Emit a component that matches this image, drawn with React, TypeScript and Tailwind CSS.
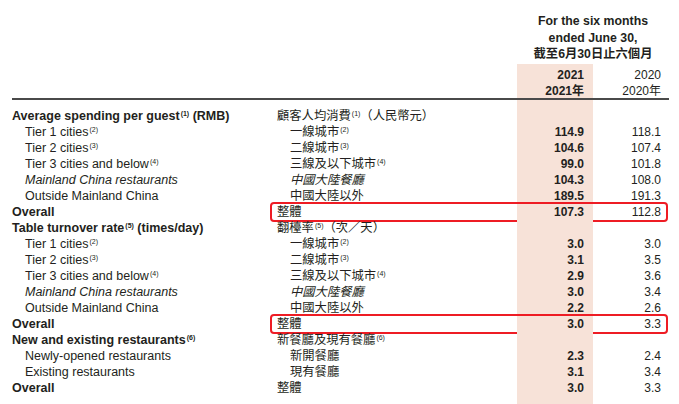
import React from "react";

type Row = {
  en: string;
  enSup?: string;
  enSuffix?: string;
  zh: string;
  zhSup?: string;
  zhSuffix?: string;
  kind: "head" | "sub" | "italic" | "total";
  a?: string;
  b?: string;
  hl?: boolean;
};

const rows: Row[] = [
  { en: "Average spending per guest", enSup: "(1)", enSuffix: " (RMB)", zh: "顧客人均消費", zhSup: "(1)", zhSuffix: "（人民幣元）", kind: "head" },
  { en: "Tier 1 cities", enSup: "(2)", zh: "一線城市", zhSup: "(2)", kind: "sub", a: "114.9", b: "118.1" },
  { en: "Tier 2 cities", enSup: "(3)", zh: "二線城市", zhSup: "(3)", kind: "sub", a: "104.6", b: "107.4" },
  { en: "Tier 3 cities and below", enSup: "(4)", zh: "三線及以下城市", zhSup: "(4)", kind: "sub", a: "99.0", b: "101.8" },
  { en: "Mainland China restaurants", zh: "中國大陸餐廳", kind: "italic", a: "104.3", b: "108.0" },
  { en: "Outside Mainland China", zh: "中國大陸以外", kind: "sub", a: "189.5", b: "191.3" },
  { en: "Overall", zh: "整體", kind: "total", a: "107.3", b: "112.8", hl: true },
  { en: "Table turnover rate", enSup: "(5)", enSuffix: " (times/day)", zh: "翻檯率", zhSup: "(5)", zhSuffix: "（次／天）", kind: "head" },
  { en: "Tier 1 cities", enSup: "(2)", zh: "一線城市", zhSup: "(2)", kind: "sub", a: "3.0", b: "3.0" },
  { en: "Tier 2 cities", enSup: "(3)", zh: "二線城市", zhSup: "(3)", kind: "sub", a: "3.1", b: "3.5" },
  { en: "Tier 3 cities and below", enSup: "(4)", zh: "三線及以下城市", zhSup: "(4)", kind: "sub", a: "2.9", b: "3.6" },
  { en: "Mainland China restaurants", zh: "中國大陸餐廳", kind: "italic", a: "3.0", b: "3.4" },
  { en: "Outside Mainland China", zh: "中國大陸以外", kind: "sub", a: "2.2", b: "2.6" },
  { en: "Overall", zh: "整體", kind: "total", a: "3.0", b: "3.3", hl: true },
  { en: "New and existing restaurants", enSup: "(6)", zh: "新餐廳及現有餐廳", zhSup: "(6)", kind: "head" },
  { en: "Newly-opened restaurants", zh: "新開餐廳", kind: "sub", a: "2.3", b: "2.4" },
  { en: "Existing restaurants", zh: "現有餐廳", kind: "sub", a: "3.1", b: "3.4" },
  { en: "Overall", zh: "整體", kind: "total", a: "3.0", b: "3.3" },
];

function Sup({ c }: { c: string }) {
  return <span className="relative -top-[4px] ml-[1px] text-[7px] leading-none">{c}</span>;
}

const SHADE = "bg-[#f7e2d8]";

function DataRow({ r }: { r: Row }) {
  const bold = r.kind === "head" || r.kind === "total";
  const indent = r.kind === "sub" || r.kind === "italic";
  const italic = r.kind === "italic";
  return (
    <div className="flex h-4 leading-4">
      <div
        className={`w-[272px] shrink-0 whitespace-nowrap text-[12.5px] ${indent ? "pl-[25px]" : "pl-3"} ${bold ? "font-bold" : ""} ${italic ? "italic" : ""}`}
      >
        {r.en}
        {r.enSup && <Sup c={r.enSup} />}
        {r.enSuffix}
      </div>
      <div
        className={`flex w-[394px] shrink-0 ${r.hl ? "rounded-[2px] outline-[length:2.5px] outline-offset-0 outline-[#ee1c24]" : ""}`}
      >
        <div className={`w-[245px] shrink-0 whitespace-nowrap text-[12.3px] ${indent ? "pl-[18px]" : "pl-[5px]"} ${italic ? "italic" : ""}`}>
          {r.zh}
          {r.zhSup && <Sup c={r.zhSup} />}
          {r.zhSuffix}
        </div>
        <div className={`w-[76px] shrink-0 pr-[9px] text-right font-bold ${SHADE}`}>{r.a}</div>
        <div className="w-[73px] shrink-0 pr-[5px] text-right">{r.b}</div>
      </div>
    </div>
  );
}

function ShadeRow({ h }: { h: string }) {
  return (
    <div className={`flex ${h}`}>
      <div className="w-[517px] shrink-0" />
      <div className={`w-[76px] shrink-0 ${SHADE}`} />
    </div>
  );
}

export default function App() {
  return (
    <div
      className="flex h-[404px] w-[679px] flex-col overflow-hidden bg-white text-[12px] text-[#231f20]"
      style={{ fontFamily: '"Liberation Sans", Arial, "Noto Sans CJK TC", sans-serif' }}
    >
      <div className="flex h-[64px] shrink-0 pt-[13px]">
        <div className="w-[517px] shrink-0" />
        <div className="w-[152px] shrink-0 text-center text-[12.3px] font-bold leading-[16.5px]">
          <div>For the six months</div>
          <div>ended June 30,</div>
          <div>截至6月30日止六個月</div>
        </div>
      </div>
      <div className="flex h-[34px] shrink-0 leading-4">
        <div className="w-[517px] shrink-0" />
        <div className={`w-[76px] shrink-0 pt-[3px] pr-[9px] text-right font-bold ${SHADE}`}>
          <div>2021</div>
          <div>2021年</div>
        </div>
        <div className="w-[73px] shrink-0 pt-[3px] pr-[5px] text-right">
          <div>2020</div>
          <div>2020年</div>
        </div>
      </div>
      <div className="ml-3 h-[2px] w-[657px] shrink-0 bg-[#4a4a4a]" />
      <ShadeRow h="h-[8px] shrink-0" />
      {rows.map((r, i) => (
        <DataRow key={i} r={r} />
      ))}
      <ShadeRow h="flex-1" />
    </div>
  );
}
